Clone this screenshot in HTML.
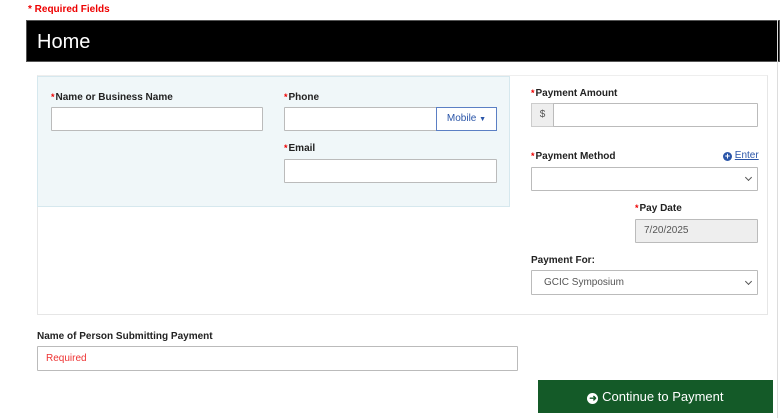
<!DOCTYPE html>
<html><head><meta charset="utf-8"><style>
*{box-sizing:border-box;margin:0;padding:0}
body{width:780px;height:418px;background:#fff;font-family:"Liberation Sans",sans-serif;position:relative;overflow:hidden;color:#222}
.a{position:absolute}
.lbl{position:absolute;font-size:10px;font-weight:bold;color:#222;white-space:nowrap}
.lbl i{color:#e00;font-style:normal;font-size:9px;margin-right:1px}
.in{position:absolute;background:#fff;border:1px solid #bbb;border-radius:1px}
.chev{position:absolute;right:6px;top:7px;width:5px;height:5px;border-right:1px solid #555;border-bottom:1px solid #555;transform:rotate(45deg)}
</style></head><body>
<div class="a" style="left:28px;top:4px;font-size:10px;font-weight:bold;color:#e00">* Required Fields</div>
<div class="a" style="left:26px;top:20px;width:754px;height:42px;background:#000;border:1px solid #555"></div>
<div class="a" style="left:37px;top:31px;font-size:20px;color:#fff">Home</div>
<div class="a" style="left:777px;top:20px;width:1px;height:398px;background:#ddd"></div>
<div class="a" style="left:37px;top:75px;width:731px;height:240px;border:1px solid #e6e6e6;border-top-color:#eee"></div>
<div class="a" style="left:37px;top:76px;width:473px;height:131px;background:#f0f7f9;border:1px solid #d6e8ee"></div>
<div class="lbl" style="left:51px;top:92px"><i>*</i>Name or Business Name</div>
<div class="in" style="left:51px;top:107px;width:212px;height:24px"></div>
<div class="lbl" style="left:284px;top:92px"><i>*</i>Phone</div>
<div class="in" style="left:284px;top:107px;width:153px;height:24px"></div>
<div class="a" style="left:436px;top:107px;width:61px;height:24px;border:1px solid #5b7fc4;background:#fff;color:#2a55a8;font-size:10px;line-height:22px;text-align:center">Mobile <span style="font-size:7px">▼</span></div>
<div class="lbl" style="left:284px;top:143px"><i>*</i>Email</div>
<div class="in" style="left:284px;top:159px;width:213px;height:24px"></div>
<div class="lbl" style="left:531px;top:88px"><i>*</i>Payment Amount</div>
<div class="a" style="left:531px;top:103px;width:23px;height:24px;background:#eee;border:1px solid #ccc;font-size:10px;color:#555;text-align:center;line-height:22px">$</div>
<div class="in" style="left:553px;top:103px;width:205px;height:24px"></div>
<div class="lbl" style="left:531px;top:151px"><i>*</i>Payment Method</div>
<div class="a" style="left:723px;top:150px;font-size:10px;color:#2a55a8"><span style="display:inline-block;width:9px;height:9px;border-radius:50%;background:#2a55a8;color:#fff;font-size:9px;line-height:9px;text-align:center;font-weight:bold;vertical-align:-1px">+</span> <u>Enter</u></div>
<div class="in" style="left:531px;top:167px;width:227px;height:24px"><div class="chev"></div></div>
<div class="lbl" style="left:635px;top:203px"><i>*</i>Pay Date</div>
<div class="in" style="left:635px;top:219px;width:123px;height:24px;background:#eee;font-size:10px;color:#555;line-height:22px;padding-left:8px">7/20/2025</div>
<div class="lbl" style="left:531px;top:255px">Payment For:</div>
<div class="in" style="left:531px;top:270px;width:227px;height:25px;font-size:10px;color:#555;line-height:23px;padding-left:12px">GCIC Symposium<div class="chev" style="top:8px"></div></div>
<div class="lbl" style="left:37px;top:331px">Name of Person Submitting Payment</div>
<div class="in" style="left:37px;top:346px;width:481px;height:25px;font-size:10px;color:#e33;line-height:23px;padding-left:8px">Required</div>
<div class="a" style="left:538px;top:380px;width:235px;height:33px;background:#145a28;color:#fff;font-size:13px;line-height:33px;text-align:center"><span style="display:inline-block;width:11px;height:11px;border-radius:50%;background:#fff;color:#145a28;font-size:9px;line-height:11px;font-weight:bold;vertical-align:0px">➜</span> Continue to Payment</div>
</body></html>
